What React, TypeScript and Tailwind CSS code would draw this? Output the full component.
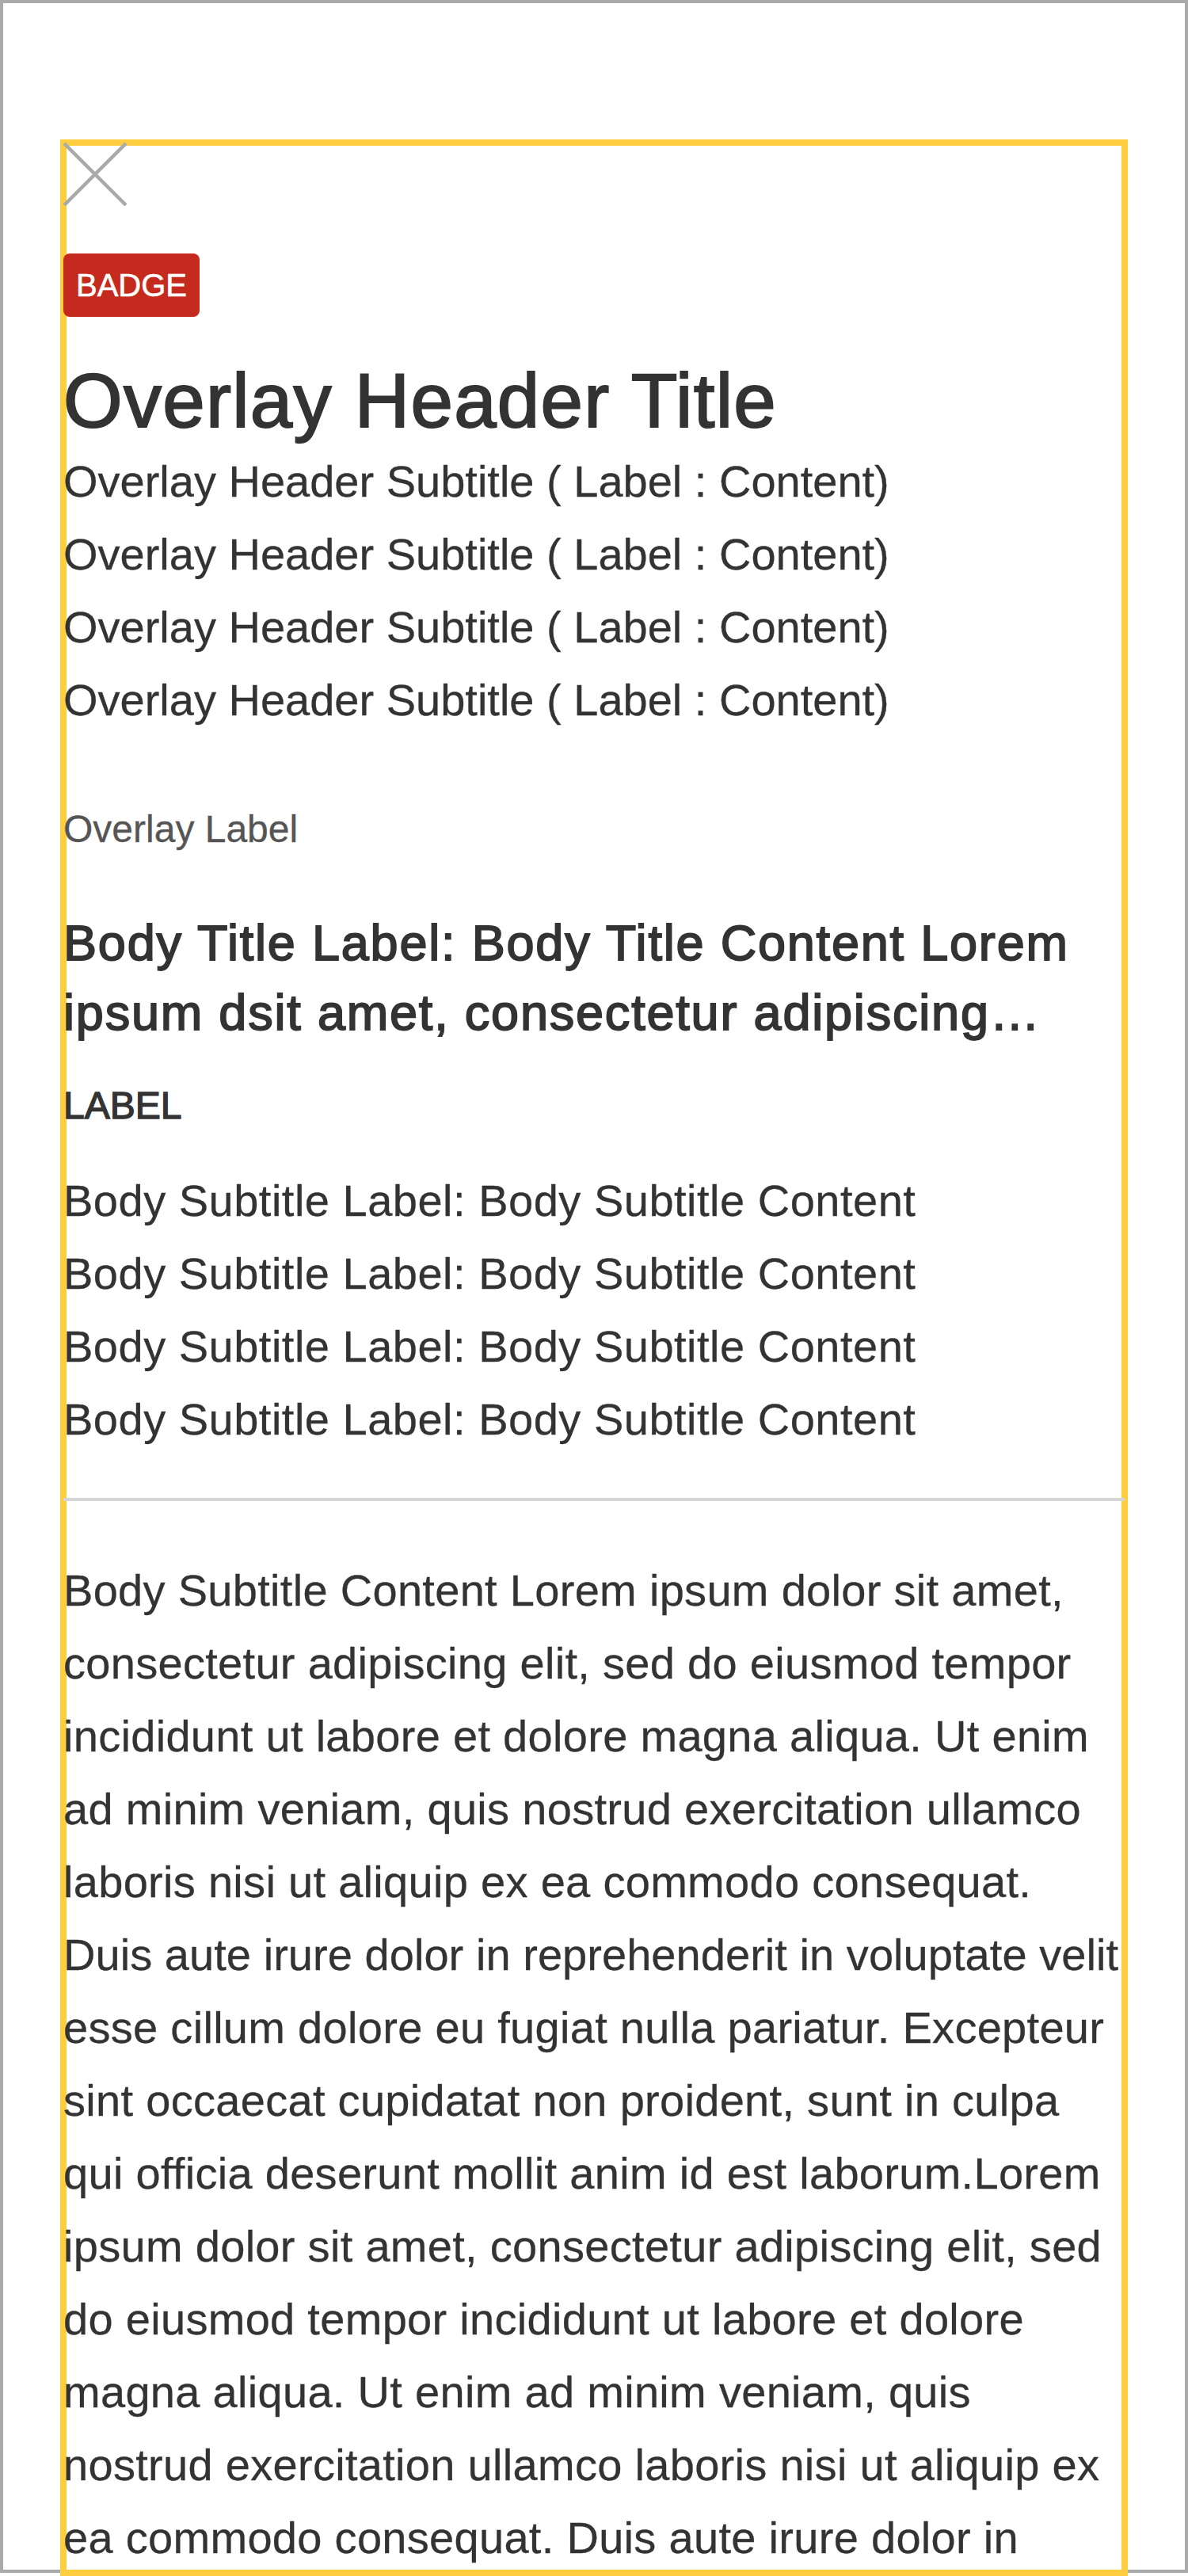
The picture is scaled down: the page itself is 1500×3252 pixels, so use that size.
import React from "react";

const paragraphLines = [
  "Body Subtitle Content Lorem ipsum dolor sit amet,",
  "consectetur adipiscing elit, sed do eiusmod tempor",
  "incididunt ut labore et dolore magna aliqua. Ut enim",
  "ad minim veniam, quis nostrud exercitation ullamco",
  "laboris nisi ut aliquip ex ea commodo consequat.",
  "Duis aute irure dolor in reprehenderit in voluptate velit",
  "esse cillum dolore eu fugiat nulla pariatur. Excepteur",
  "sint occaecat cupidatat non proident, sunt in culpa",
  "qui officia deserunt mollit anim id est laborum.Lorem",
  "ipsum dolor sit amet, consectetur adipiscing elit, sed",
  "do eiusmod tempor incididunt ut labore et dolore",
  "magna aliqua. Ut enim ad minim veniam, quis",
  "nostrud exercitation ullamco laboris nisi ut aliquip ex",
  "ea commodo consequat. Duis aute irure dolor in",
];

function CloseIcon() {
  return (
    <svg width="80" height="80" viewBox="0 0 80 80" className="block">
      <line x1="1" y1="1" x2="79" y2="79" stroke="#aaaaaa" strokeWidth="4.5" />
      <line x1="79" y1="1" x2="1" y2="79" stroke="#aaaaaa" strokeWidth="4.5" />
    </svg>
  );
}

export default function App() {
  const subtitle = "Overlay Header Subtitle ( Label : Content)";
  const bodySub = "Body Subtitle Label: Body Subtitle Content";
  return (
    <div className="w-[1500px] h-[3252px] bg-white font-['Liberation_Sans',Arial,sans-serif] text-[#333333]">
      <div className="h-[3248px] border-4 border-[#aaaaaa] px-[76px] pt-[176px]">
        <div className="relative h-[3068px]">
          <div className="pointer-events-none absolute -inset-[4px] border-8 border-[#ffcd40]" />
          <div className="relative h-full overflow-hidden [-webkit-text-stroke:0.3px_#333333]">
            <CloseIcon />
            <div className="mt-[60px] flex">
              <span className="flex h-[80px] items-center rounded-[8px] bg-[#c42a1d] px-[16px] text-[40px] leading-none text-white [-webkit-text-stroke:0.6px_#ffffff]">
                BADGE
              </span>
            </div>
            <h1 className="mt-[50px] whitespace-nowrap text-[96px] leading-[112px] font-normal tracking-[1.3px] [-webkit-text-stroke:2px_#333333]">
              Overlay Header Title
            </h1>
            <div className="text-[56px] leading-[92px]">
              <div className="whitespace-nowrap">{subtitle}</div>
              <div className="whitespace-nowrap">{subtitle}</div>
              <div className="whitespace-nowrap">{subtitle}</div>
              <div className="whitespace-nowrap">{subtitle}</div>
            </div>
            <div className="mt-[85px] text-[48px] leading-[64px] text-[#555555] [-webkit-text-stroke:0.3px_#555555]">
              Overlay Label
            </div>
            <h2 className="mt-[67px] text-[63px] leading-[88px] font-normal tracking-[1.8px] [-webkit-text-stroke:1.8px_#333333]">
              <span className="block whitespace-nowrap">Body Title Label: Body Title Content Lorem</span>
              <span className="block whitespace-nowrap">ipsum dsit amet, consectetur adipiscing…</span>
            </h2>
            <div className="mt-[46px] text-[48px] leading-[56px] font-normal [-webkit-text-stroke:1.4px_#333333]">
              LABEL
            </div>
            <div className="mt-[46px] text-[56px] leading-[92px] tracking-[0.5px]">
              <div className="whitespace-nowrap">{bodySub}</div>
              <div className="whitespace-nowrap">{bodySub}</div>
              <div className="whitespace-nowrap">{bodySub}</div>
              <div className="whitespace-nowrap">{bodySub}</div>
            </div>
            <div className="mt-[53px] h-[4px] bg-[#d5d5d5]" />
            <p className="mt-[67px] text-[56px] leading-[92px] tracking-[0.3px]">
              {paragraphLines.map((l, i) => (
                <span
                  key={i}
                  className={i === 5 ? "block whitespace-nowrap tracking-[0.05px]" : "block whitespace-nowrap"}
                >
                  {l}
                </span>
              ))}
            </p>
          </div>
        </div>
      </div>
    </div>
  );
}
